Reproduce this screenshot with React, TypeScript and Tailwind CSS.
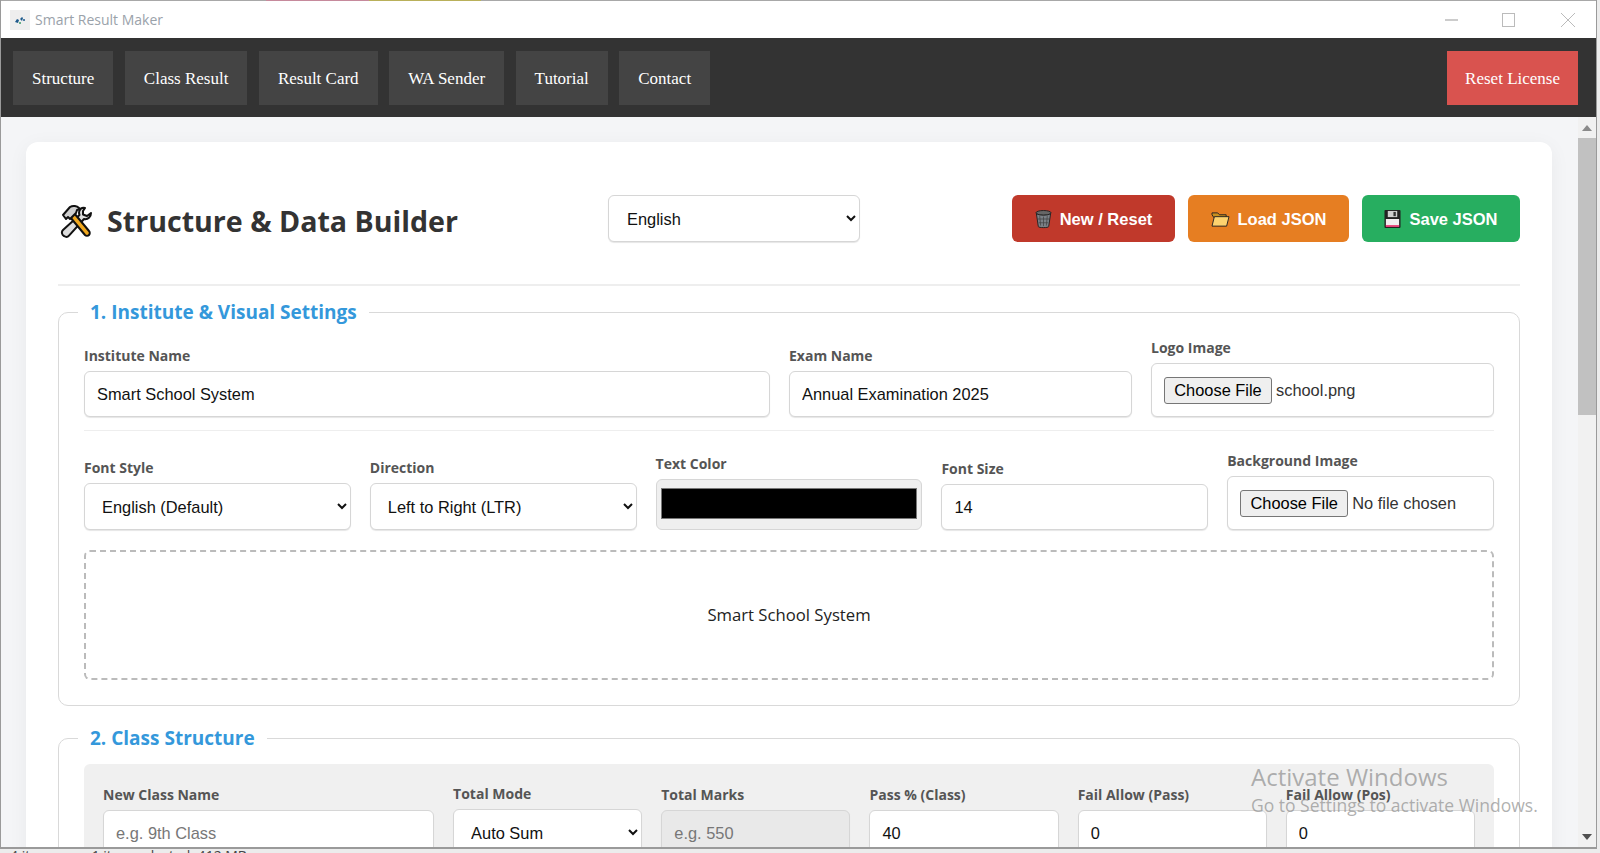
import React from "react";

const sans = "font-['Open_Sans',sans-serif]";
const arial = "font-['Liberation_Sans',Arial,sans-serif]";
const ctl = `w-full min-w-0 rounded-[6px] border border-[#d6d6d6] shadow-[0_1px_1px_#e6e6e6] bg-white text-[16.4px] text-[#111] outline-none ${arial}`;

function Tools() {
  return (
    <svg viewBox="0 0 36 36" className="w-[36px] h-[36px] shrink-0">
      <path d="M27 5c-3-1-6 1-6 5l.5 2L5 27c-2 2-1 5 1 6 2 1.400 4 .8 5-.4L26 16c4 .8 7-2 7-6l-4 3-4-1.500V8z" fill="#ddd" stroke="#111" strokeWidth="2" strokeLinejoin="round" />
      <path d="M12 14 27 32c1 1 3 1 4 0s1-3 0-4L16 10z" fill="#f0a81e" stroke="#111" strokeWidth="2" strokeLinejoin="round" />
      <path d="M5 12 12 4c3-2 7-1 9 1l1 1-3 1-1 3-6 6-2-2-2 2z" fill="#cfcfcf" stroke="#111" strokeWidth="2" strokeLinejoin="round" />
    </svg>
  );
}
function Trash() {
  return (
    <svg viewBox="0 0 18 20" className="w-[17px] h-[20px] shrink-0">
      <ellipse cx="9" cy="3.500" rx="8" ry="2.500" fill="#666" stroke="#222" />
      <path d="M1.500 4.500 3.500 18c.3 1.500 10.700 1.500 11 0l2-13.500c-3 2-12 2-15 0z" fill="#7b8187" stroke="#222" />
      <path d="M5 7l1 10M9 7.500V17.500M13 7l-1 10M3 10h12M4 14h10" stroke="#444" strokeWidth=".8" />
    </svg>
  );
}
function Folder() {
  return (
    <svg viewBox="0 0 20 18" className="w-[19px] h-[17px] shrink-0">
      <path d="M1 4V2h6l2 2h7v3H3z" fill="#c98f1e" stroke="#222" />
      <path d="M3.500 6H19l-2.500 10H1z" fill="#fdd26e" stroke="#222" />
    </svg>
  );
}
function Floppy() {
  return (
    <svg viewBox="0 0 18 20" className="w-[17px] h-[20px] shrink-0">
      <rect x=".5" y=".5" width="17" height="19" rx="1" fill="#222" />
      <rect x="2" y="10" width="14" height="8" fill="#f2eef0" />
      <rect x="2" y="16.500" width="14" height="1.800" fill="#e8336f" />
      <rect x="4" y="1.500" width="10" height="6.500" fill="#cfcfcf" />
      <rect x="10" y="2.500" width="2.500" height="4.500" fill="#333" />
    </svg>
  );
}

function Label({ children }: { children: React.ReactNode }) {
  return <label className={`block mb-[5px] text-[14px] leading-[20px] font-bold text-[#555] ${sans}`}>{children}</label>;
}
function FileBox({ name }: { name: string }) {
  return (
    <div className={`flex items-center h-[54px] pl-[12px] rounded-[6px] border border-[#d6d6d6] shadow-[0_1px_1px_#e6e6e6] bg-white text-[16.4px] text-[#333] ${arial}`}>
      <button className="h-[27px] w-[108px] shrink-0 rounded-[3px] border border-[#767676] bg-[#efefef] text-[16.4px] text-black">Choose File</button>
      <span className="ml-[4px] whitespace-nowrap">{name}</span>
    </div>
  );
}
function Section({ title, children }: { title: string; children: React.ReactNode }) {
  return (
    <fieldset className="border border-[#d9d9d9] rounded-[10px] px-[25px] min-w-0">
      <legend className={`-ml-[6px] px-[12px] text-[19px] leading-[26px] font-bold text-[#3498db] ${sans}`}>{title}</legend>
      {children}
    </fieldset>
  );
}
function ActionBtn({ icon, text, cls }: { icon: React.ReactNode; text: string; cls: string }) {
  return (
    <button className={`flex items-center justify-center gap-[8px] h-[47px] pt-[1px] rounded-[6px] text-white text-[16.5px] font-bold ${arial} ${cls}`}>
      {icon}
      {text}
    </button>
  );
}
function NavBtn({ children, cls = "bg-[#444] px-[19px]" }: { children: React.ReactNode; cls?: string }) {
  return <button className={`h-[54px] pt-[2px] text-white text-[17px] ${cls}`}>{children}</button>;
}

export default function App() {
  return (
    <div className="relative h-[853px] w-[1600px] overflow-hidden bg-[#ececec] font-['Liberation_Serif',serif]">
      <div className="flex h-[849px] w-[1597px] flex-col border-l border-b-2 border-r border-[#9a9a9a] bg-white">
        <div className="flex h-[1px] shrink-0 bg-[#a8a8a8]">
          <div className="ml-[265px] w-[103px] bg-[#c68a9c]" />
          <div className="w-[112px] bg-[#b9b05a]" />
        </div>
        <div className={`flex h-[37px] shrink-0 items-center bg-white pl-[9px] ${sans}`}>
          <div className="flex h-[20px] w-[20px] items-center justify-center bg-[#eeeeee]">
            <svg viewBox="0 0 12 12" className="w-[12px] h-[12px]">
              <path d="M1 8l2-3 2 1-1 3zM6 5l2-2 1 1-1 3z" fill="#1d5a8c" />
              <circle cx="10" cy="6" r="1" fill="#1d5a8c" />
              <circle cx="6" cy="9" r="1" fill="#3a9a6a" />
            </svg>
          </div>
          <span className="ml-[5px] text-[14px] text-[#9aa2aa]">Smart Result Maker</span>
          <div className="ml-auto flex items-center">
            <svg viewBox="0 0 14 14" className="w-[14px] h-[14px] mr-[43px]"><path d="M0 7h13" stroke="#bbb" strokeWidth="1.500" /></svg>
            <svg viewBox="0 0 14 14" className="w-[14px] h-[14px] mr-[45px]"><rect x=".5" y=".5" width="12" height="13" fill="none" stroke="#bbb" /></svg>
            <svg viewBox="0 0 14 14" className="w-[14px] h-[14px] mr-[21px]"><path d="M0 0l14 14M14 0L0 14" stroke="#bbb" /></svg>
          </div>
        </div>

        <nav className="flex h-[79px] shrink-0 items-center gap-[11.500px] bg-[#333] pl-[12px] pr-[18px]">
          <NavBtn>Structure</NavBtn>
          <NavBtn>Class Result</NavBtn>
          <NavBtn>Result Card</NavBtn>
          <NavBtn>WA Sender</NavBtn>
          <NavBtn>Tutorial</NavBtn>
          <NavBtn>Contact</NavBtn>
          <div className="ml-auto">
            <NavBtn cls="bg-[#d9534f] px-[18px]">Reset License</NavBtn>
          </div>
        </nav>

        <div className="flex min-h-0 flex-1">
          <main className="min-w-0 flex-1 overflow-hidden bg-[#f4f5f7] pl-[25px] pr-[26px] pt-[25px]">
            <div className="rounded-[12px] bg-white px-[32px] pt-[53px] shadow-[0_4px_20px_rgba(0,0,0,0.05)]">
              <header className="flex items-center border-b-2 border-[#eeeeee] pb-[42px]">
                <div className={`flex h-[47px] w-[550px] items-center gap-[13px] pt-[5px] text-[28.6px] font-bold text-[#333] ${sans}`}>
                  <Tools />
                  <h1>Structure &amp; Data Builder</h1>
                </div>
                <select defaultValue="English" className={`${ctl} !w-[252px] h-[47px] pl-[14px]`}>
                  <option>English</option>
                </select>
                <div className="ml-auto flex gap-[13px]">
                  <ActionBtn icon={<Trash />} text="New / Reset" cls="w-[163px] bg-[#c0392b]" />
                  <ActionBtn icon={<Folder />} text="Load JSON" cls="w-[161px] bg-[#e67e22]" />
                  <ActionBtn icon={<Floppy />} text="Save JSON" cls="w-[158px] bg-[#27ae60]" />
                </div>
              </header>

              <div className="mt-[13px] flex flex-col gap-[19px]">
                <Section title="1. Institute & Visual Settings">
                  <div className="mt-[13px] flex items-end gap-[19px] border-b border-[#eeeeee] pb-[13px]">
                    <div className="flex-[2] min-w-0">
                      <Label>Institute Name</Label>
                      <input defaultValue="Smart School System" className={`${ctl} h-[46px] px-[12px]`} />
                    </div>
                    <div className="flex-1 min-w-0">
                      <Label>Exam Name</Label>
                      <input defaultValue="Annual Examination 2025" className={`${ctl} h-[46px] px-[12px]`} />
                    </div>
                    <div className="flex-1 min-w-0">
                      <Label>Logo Image</Label>
                      <FileBox name="school.png" />
                    </div>
                  </div>
                  <div className="mt-[20px] flex items-end gap-[19px]">
                    <div className="flex-1 min-w-0">
                      <Label>Font Style</Label>
                      <select defaultValue="e" className={`${ctl} h-[47px] pl-[13px]`}>
                        <option value="e">English (Default)</option>
                      </select>
                    </div>
                    <div className="flex-1 min-w-0">
                      <Label>Direction</Label>
                      <select defaultValue="l" className={`${ctl} h-[47px] pl-[13px]`}>
                        <option value="l">Left to Right (LTR)</option>
                      </select>
                    </div>
                    <div className="flex-1 min-w-0">
                      <Label>Text Color</Label>
                      <input type="color" defaultValue="#000000" className="block h-[51px] w-full rounded-[6px] border border-[#d6d6d6] bg-[#efefef] px-[2px] pt-[4px] pb-[6px]" />
                    </div>
                    <div className="flex-1 min-w-0">
                      <Label>Font Size</Label>
                      <input defaultValue="14" className={`${ctl} h-[46px] px-[12px]`} />
                    </div>
                    <div className="flex-1 min-w-0">
                      <Label>Background Image</Label>
                      <FileBox name="No file chosen" />
                    </div>
                  </div>
                  <div className={`mt-[20px] flex h-[130px] items-center justify-center rounded-[6px] border-2 border-dashed border-[#bbbbbb] text-[16.7px] text-[#222] ${sans}`}>
                    Smart School System
                  </div>
                  <div className="h-[25px]" />
                </Section>

                <Section title="2. Class Structure">
                  <div className="mt-[13px] flex items-end gap-[19px] rounded-t-[6px] bg-[#f0f0f0] px-[19px] pt-[20px] pb-[20px]">
                    <div className="flex-[1.75] min-w-0">
                      <Label>New Class Name</Label>
                      <input placeholder="e.g. 9th Class" className={`${ctl} h-[46px] px-[12px] placeholder:text-[#777]`} />
                    </div>
                    <div className="flex-1 min-w-0">
                      <Label>Total Mode</Label>
                      <select defaultValue="a" className={`${ctl} h-[47px] pl-[13px]`}>
                        <option value="a">Auto Sum</option>
                      </select>
                    </div>
                    <div className="flex-1 min-w-0">
                      <Label>Total Marks</Label>
                      <input disabled placeholder="e.g. 550" className={`${ctl} h-[46px] px-[12px] !bg-[#e9e9e9] placeholder:text-[#777]`} />
                    </div>
                    <div className="flex-1 min-w-0">
                      <Label>Pass % (Class)</Label>
                      <input defaultValue="40" className={`${ctl} h-[46px] px-[12px]`} />
                    </div>
                    <div className="flex-1 min-w-0">
                      <Label>Fail Allow (Pass)</Label>
                      <input defaultValue="0" className={`${ctl} h-[46px] px-[12px]`} />
                    </div>
                    <div className="flex-1 min-w-0">
                      <Label>Fail Allow (Pos)</Label>
                      <input defaultValue="0" className={`${ctl} h-[46px] px-[12px]`} />
                    </div>
                  </div>
                </Section>
              </div>
            </div>
          </main>

          <div className="flex w-[18px] shrink-0 flex-col bg-[#f1f1f1]">
            <div className="flex h-[21px] items-center justify-center text-[#666]">
              <svg viewBox="0 0 10 6" className="w-[10px] h-[6px]"><path d="M0 6l5-6 5 6z" fill="#8a8a8a" /></svg>
            </div>
            <div className="h-[277px] bg-[#c1c1c1]" />
            <div className="flex-1" />
            <div className="flex h-[21px] items-center justify-center">
              <svg viewBox="0 0 10 6" className="w-[10px] h-[6px]"><path d="M0 0l5 6 5-6z" fill="#505050" /></svg>
            </div>
          </div>
        </div>
      </div>

      <div className={`flex h-[4px] gap-[34px] overflow-hidden pl-[10px] text-[14px] leading-[14px] text-[#444] ${sans}`}>
        <span>4 items</span>
        <span>1 item selected &nbsp;412 MB</span>
      </div>

      <div className={`absolute left-[1251px] top-[760px] text-[#8e8e8e]/70 ${sans}`}>
        <div className="text-[24px] leading-[34px] whitespace-nowrap">Activate Windows</div>
        <div className="text-[17.5px] leading-[23px] whitespace-nowrap">Go to Settings to activate Windows.</div>
      </div>
    </div>
  );
}
